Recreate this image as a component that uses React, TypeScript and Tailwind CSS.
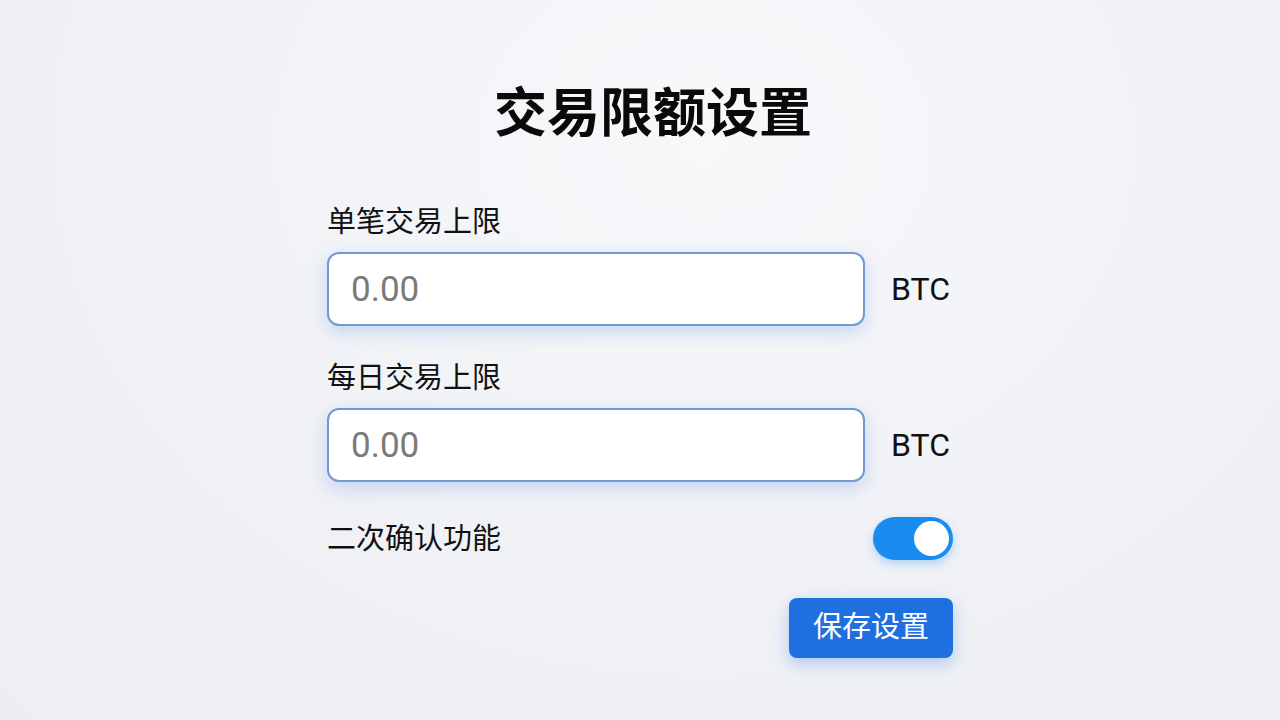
import React, { useState } from 'react';

const fontStack = { fontFamily: 'Roboto, "Noto Sans CJK SC", sans-serif' };

interface LimitFieldProps {
    label: string;
    value: string;
    onChange: (v: string) => void;
}

const LimitField: React.FC<LimitFieldProps> = ({ label, value, onChange }) => (
    <div className="flex flex-col">
        <label className="text-[29px] leading-[38px] text-[#111] mb-[11px]">{label}</label>
        <div className="flex items-center gap-[26px]">
            <input
                value={value}
                onChange={(e) => onChange(e.target.value)}
                placeholder="0.00"
                className="w-[538px] h-[74px] rounded-[12px] border-2 border-[#7399d2] bg-white px-[22px] text-[35px] text-[#222] placeholder:text-[#7a7a7a] outline-none shadow-[0_6px_18px_rgba(70,120,230,0.25)]"
                style={fontStack}
            />
            <span className="text-[32px] text-[#111]">BTC</span>
        </div>
    </div>
);

export default function App() {
    const [single, setSingle] = useState('');
    const [daily, setDaily] = useState('');
    const [confirm, setConfirm] = useState(true);

    return (
        <div
            className="w-[1280px] h-[720px] bg-[radial-gradient(ellipse_at_55%_20%,#f7f8fa_0%,#eff1f5_60%,#eceef3_100%)] flex flex-col items-center"
            style={fontStack}
        >
            <h1 className="mt-[80px] pl-[26px] text-[53px] leading-[68px] font-bold text-[#0a0a0a]">
                交易限额设置
            </h1>

            <div className="w-[626px] mt-[55px] flex flex-col">
                <LimitField label="单笔交易上限" value={single} onChange={setSingle} />
                <div className="mt-[33px]">
                    <LimitField label="每日交易上限" value={daily} onChange={setDaily} />
                </div>

                <div className="flex items-center justify-between mt-[35px]">
                    <span className="text-[29px] leading-[38px] text-[#111]">二次确认功能</span>
                    <button
                        onClick={() => setConfirm(!confirm)}
                        className={`w-[80px] h-[43px] rounded-full p-[4px] flex items-center shadow-[0_4px_10px_rgba(30,140,240,0.3)] ${confirm ? 'bg-[#1a8cf0] justify-end' : 'bg-gray-300 justify-start'}`}
                    >
                        <span className="w-[35px] h-[35px] rounded-full bg-white block" />
                    </button>
                </div>

                <div className="flex justify-end mt-[38px]">
                    <button className="w-[164px] h-[60px] rounded-[8px] bg-[#1f6fe0] text-white text-[29px] shadow-[0_6px_16px_rgba(40,110,230,0.3)]">
                        保存设置
                    </button>
                </div>
            </div>
        </div>
    );
}
